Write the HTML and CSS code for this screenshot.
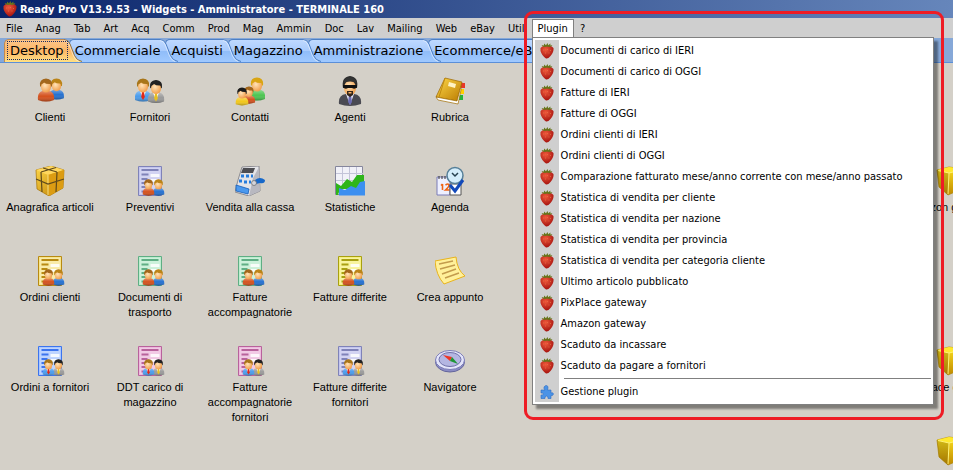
FILE: index.html
```html
<!DOCTYPE html>
<html lang="it">
    <head>
        <meta charset="utf-8">
        <title>Ready Pro</title>
        <link rel="stylesheet" href="styles.css">
    </head>
    <body>
        <!-- shared icons -->
        <svg class="sprites" width="0" height="0" aria-hidden="true">
            <defs>
                <radialGradient id="skin" cx=".4" cy=".35" r=".7"><stop offset="0" stop-color="#ffe3b8"/><stop offset="1" stop-color="#f09a45"/></radialGradient>
                <radialGradient id="berry" cx=".4" cy=".3" r=".7"><stop offset="0" stop-color="#ef5a3c"/><stop offset="1" stop-color="#a5120f"/></radialGradient>
                <linearGradient id="gold" x1="0" y1="0" x2="1" y2="1"><stop offset="0" stop-color="#ffd94a"/><stop offset="1" stop-color="#b97a00"/></linearGradient>
                <linearGradient id="cube-side" x1="0" y1="0" x2="0" y2="1"><stop offset="0" stop-color="#fbe01e"/><stop offset="1" stop-color="#c08a00"/></linearGradient>
                <linearGradient id="shade" x1="0" y1="0" x2="0" y2="1"><stop offset="0" stop-color="#fff" stop-opacity=".35"/><stop offset=".5" stop-color="#fff" stop-opacity="0"/><stop offset="1" stop-color="#000" stop-opacity=".3"/></linearGradient>
                <linearGradient id="tab-blue" x1="0" y1="0" x2="0" y2="1"><stop offset="0" stop-color="#bfd9ff"/><stop offset=".5" stop-color="#a9cbfd"/><stop offset=".5" stop-color="#8fbcf8"/><stop offset="1" stop-color="#a0c9ff"/></linearGradient>
                <linearGradient id="tab-orange" x1="0" y1="0" x2="0" y2="1"><stop offset="0" stop-color="#fcc489"/><stop offset=".5" stop-color="#fdb767"/><stop offset="1" stop-color="#ffe084"/></linearGradient>
            </defs>

            <symbol id="strawberry" viewBox="0 0 14 16">
                <path d="M.5 5Q3 2 7 3Q11 2 13.500 5Q14 9 10.500 13Q8 16 6 15.500Q2 13 .5 8z" fill="url(#berry)"/>
                <path d="M3 3.500L1.500 2 4 2.500 4 .5 6 2.200 7.500 0 8.200 2.200 10.500 .5 10.300 2.500 12.500 2 11 3.500 9 4 7 3.500 5 4z" fill="#66751a"/>
                <path d="M3 7h1M7 6.500h1M10 7.500h1M5 10h1M8.500 10h1" stroke="#e8774a" stroke-width=".7"/>
            </symbol>

            <symbol id="puzzle" viewBox="0 0 14 14">
                <path d="M1 5h4Q3.500 3.500 4 2Q5 .3 6.500 .5Q8.500 1 8 3L7.500 5H11V8Q13 7 13.500 9Q13 11 11 10.500V13.500H8Q8.500 11.500 6.500 11Q4.500 11.500 5 13.500H1V10Q3 10.500 3.500 9Q3 7.500 1 8z" fill="#4b93e6" stroke="#2b6cc4" stroke-width=".6"/>
            </symbol>

            <symbol id="person" viewBox="0 0 18 24">
                <path class="coat" d="M1 22Q0 14 6 13h6Q18 14 17 22Q9 25 1 22z"/>
                <path d="M1 22Q0 14 6 13h6Q18 14 17 22Q9 25 1 22z" fill="url(#shade)"/>
                <path class="shirt" d="M6 13L9 21 12 13z"/>
                <path class="tie" d="M8 14h2l.8 5L9 22 7.200 19z"/>
                <path class="hair" d="M3 8Q2 1 9 .5Q16 1 15 8L13 10H5z"/>
                <ellipse cx="9" cy="9" rx="5" ry="5.500" fill="url(#skin)"/>
                <path class="hair" d="M3.500 6Q4 1.500 9 1Q14 1.500 14.500 6Q9 6.500 7 4.500Q6 6 3.500 6z"/>
            </symbol>

            <symbol id="sheet" viewBox="0 0 30 30">
                <path class="paper" d="M3.500 .5h23v29h-23z"/>
                <path d="M5 2h20v26H5z" fill="#fff" opacity=".25"/>
                <path class="ink" d="M6.500 4h17M6.500 8.500h7M6.500 13h6M6.500 17h6M6.500 21h5M6.500 25.500h4"/>
                <path d="M15.500 8h9v3h-9zM15.500 13h9v3h-9z" fill="#fff" opacity=".85"/>
            </symbol>

            <symbol id="pair" viewBox="0 0 30 30">
                <use href="#person" class="blue-coat" x="17" y="13" width="13" height="17"/>
                <use href="#person" class="red-coat" x="7" y="13" width="13" height="17"/>
            </symbol>

            <symbol id="suits" viewBox="0 0 30 30">
                <use href="#person" class="grey-suit" x="17" y="13" width="13" height="17"/>
                <use href="#person" class="blue-suit" x="7" y="13" width="13" height="17"/>
            </symbol>

            <symbol id="cube" viewBox="0 0 30 30">
                <path d="M2 4L14 1 30 3 29 22 13 29 4 21z" fill="url(#cube-side)" stroke="#b08400" stroke-width=".7"/>
                <path d="M2 4L14 1 30 3 14 7z" fill="#ffe92e"/>
                <path d="M2 4L14 7 13 29 4 21z" fill="#000" opacity=".14"/>
                <path d="M3 4.500L14 7 30 3M14 7L13 28" fill="none" stroke="#fff27a"/>
            </symbol>

            <symbol id="tab-end" viewBox="0 0 18 23">
                <path class="tab-fill" d="M0 .5Q4 .5 6 5L10.500 16.500Q12.500 21.500 18 22.500V23H0z"/>
                <path class="tab-edge" d="M0 .5Q4 .5 6 5L10.500 16.500Q12.500 21.500 18 22.500" fill="none"/>
                <path d="M0 1.500Q3.500 1.500 5 5.500L9.500 17Q11.500 21.500 15 22.500" fill="none" stroke="#fff" stroke-opacity=".5"/>
            </symbol>
        </svg>

        <div id="titlebar">
            <svg class="logo"><use href="#strawberry"/></svg>
            <span>Ready Pro V13.9.53 - Widgets - Amministratore - TERMINALE 160</span>
        </div>

        <ul id="menubar">
            <li><button>File</button></li>
            <li><button>Anag</button></li>
            <li><button>Tab</button></li>
            <li><button>Art</button></li>
            <li><button>Acq</button></li>
            <li><button>Comm</button></li>
            <li><button>Prod</button></li>
            <li><button>Mag</button></li>
            <li><button>Ammin</button></li>
            <li><button>Doc</button></li>
            <li><button>Lav</button></li>
            <li><button>Mailing</button></li>
            <li><button>Web</button></li>
            <li><button>eBay</button></li>
            <li><button>Util</button></li>
            <li class="open">
                <button>Plugin</button>
                <div class="popup">
                    <button><svg><use href="#strawberry"/></svg><span>Documenti di carico di IERI</span></button>
                    <button><svg><use href="#strawberry"/></svg><span>Documenti di carico di OGGI</span></button>
                    <button><svg><use href="#strawberry"/></svg><span>Fatture di IERI</span></button>
                    <button><svg><use href="#strawberry"/></svg><span>Fatture di OGGI</span></button>
                    <button><svg><use href="#strawberry"/></svg><span>Ordini clienti di IERI</span></button>
                    <button><svg><use href="#strawberry"/></svg><span>Ordini clienti di OGGI</span></button>
                    <button><svg><use href="#strawberry"/></svg><span>Comparazione fatturato mese/anno corrente con mese/anno passato</span></button>
                    <button><svg><use href="#strawberry"/></svg><span>Statistica di vendita per cliente</span></button>
                    <button><svg><use href="#strawberry"/></svg><span>Statistica di vendita per nazione</span></button>
                    <button><svg><use href="#strawberry"/></svg><span>Statistica di vendita per provincia</span></button>
                    <button><svg><use href="#strawberry"/></svg><span>Statistica di vendita per categoria cliente</span></button>
                    <button><svg><use href="#strawberry"/></svg><span>Ultimo articolo pubblicato</span></button>
                    <button><svg><use href="#strawberry"/></svg><span>PixPlace gateway</span></button>
                    <button><svg><use href="#strawberry"/></svg><span>Amazon gateway</span></button>
                    <button><svg><use href="#strawberry"/></svg><span>Scaduto da incassare</span></button>
                    <button><svg><use href="#strawberry"/></svg><span>Scaduto da pagare a fornitori</span></button>
                    <hr>
                    <button><svg><use href="#puzzle"/></svg><span>Gestione plugin</span></button>
                </div>
                <div class="highlight"></div>
            </li>
            <li><button>?</button></li>
        </ul>

        <div id="tabs">
            <button class="active"><span>Desktop</span><svg><use href="#tab-end"/></svg></button>
            <button><span>Commerciale</span><svg><use href="#tab-end"/></svg></button>
            <button><span>Acquisti</span><svg><use href="#tab-end"/></svg></button>
            <button><span>Magazzino</span><svg><use href="#tab-end"/></svg></button>
            <button><span>Amministrazione</span><svg><use href="#tab-end"/></svg></button>
            <button><span>Ecommerce/eBay</span><svg><use href="#tab-end"/></svg></button>
        </div>

        <div id="desktop">
            <!-- row 1 -->
            <a href="#"><svg viewBox="0 0 30 30">
                <use href="#person" class="blue-coat" x="13" y="2" width="17" height="22"/>
                <use href="#person" class="red-coat" x="2" y="2" width="18" height="24"/>
            </svg>Clienti</a>
            <a href="#"><svg viewBox="0 0 30 30">
                <use href="#person" class="blue-suit" x="-1" y="2" width="18" height="24"/>
                <use href="#person" class="grey-suit" x="12" y="3" width="18" height="25"/>
            </svg>Fornitori</a>
            <a href="#"><svg viewBox="0 0 30 30">
                <use href="#person" class="green-coat" x="13" y="0" width="18" height="26"/>
                <use href="#person" class="red-coat" x="7" y="10" width="14" height="18"/>
                <use href="#person" class="yellow-coat" x="0" y="11" width="14" height="19"/>
            </svg>Contatti</a>
            <a href="#"><svg viewBox="0 0 30 30">
                <path d="M4 28Q3 19 11 18h8Q27 19 26 28Q15 32 4 28z" fill="#4a4a52"/>
                <path d="M11 18L15 29 19 18z" fill="#e8e8f8"/>
                <path d="M14 19h2l1 7-2 3-2-3z" fill="#6a6ab0"/>
                <path d="M8 12Q6 1 15 0Q24 1 22 12z" fill="#2a2a2a"/>
                <ellipse cx="15" cy="12" rx="6" ry="7.500" fill="url(#skin)"/>
                <path d="M8 7Q9 1 15 1Q21 1 22 7Q15 4 8 7z" fill="#333"/>
                <path d="M8 9h14v2q-2 3-5 1h-4q-3 2-5-1z" fill="#111"/>
                <path d="M12 19v-4h6v4l-3 2zM13.500 16v1.500h3V16z" fill="#33241a" fill-rule="evenodd"/>
            </svg>Agenti</a>
            <a href="#"><svg viewBox="0 0 30 30">
                <path d="M26 7h4v5h-4z" fill="#e8382a"/>
                <path d="M25 13h4v5h-4z" fill="#ffd000"/>
                <path d="M24 19h4v5h-4z" fill="#27b43a"/>
                <path d="M10 2L27 6 22 25 1 21z" fill="url(#gold)" stroke="#9a6400" stroke-width=".7"/>
                <path d="M1 21L22 25 26 10 26 14 23 28 3 24z" fill="#fff" stroke="#a06b00" stroke-width=".7"/>
                <path d="M14 6l7 2-1 4-7-2z" fill="#fff3c4"/>
                <path d="M10 2L4 21" stroke="#c08a10"/>
            </svg>Rubrica</a>

            <!-- row 2 -->
            <a href="#" class="first"><svg viewBox="0 0 30 30">
                <path d="M1 4L16 0 29 4 28 22 14 30 2 23z" fill="url(#gold)" stroke="#a87200" stroke-width=".7"/>
                <path d="M1 4L16 0 29 4 13 9z" fill="#ffd75e"/>
                <path d="M13 9L29 4 28 22 14 30z" fill="#dc9c12"/>
                <path d="M13 9V29" stroke="#fff0a0" stroke-width=".8"/>
                <path d="M1 13L13 18 29 13M6 6L7 26M22 6L21 26M6 6L21 1.500M8 2L22 6" fill="none" stroke="#5f4a1c" stroke-width="1.200"/>
            </svg>Anagrafica articoli</a>
            <a href="#"><svg class="lilac"><use href="#sheet"/><use href="#pair"/></svg>Preventivi</a>
            <a href="#"><svg viewBox="0 0 30 30">
                <path d="M7 1L24 0 25 25 14 30 0 26 3 14z" fill="#e4e4e8" stroke="#77777f" stroke-width=".8"/>
                <path d="M18 12L24 1 25 25 14 30z" fill="#b8b8c0"/>
                <path d="M8 2h12l-2 5H6z" fill="#4d4d52"/>
                <path d="M6 10h3M11 10h3M16 10h2M4 15h3M9 16h3M14 16h2" stroke="#257cdd" stroke-width="3"/>
                <path d="M1 19l13 4-1 5-12-3z" fill="#4b99ee" stroke="#155db8" stroke-width=".8"/>
                <path d="M20 14q5-4 10 0q0 4-5 3l-4 1z" fill="#1768c9"/>
                <circle cx="19" cy="17" r="2.500" fill="#d5d5dc" stroke="#666" stroke-width=".7"/>
            </svg>Vendita alla cassa</a>
            <a href="#"><svg viewBox="0 0 30 30">
                <path d="M.5 .5h27v28H.5z" fill="#f1f1f8" stroke="#85869c"/>
                <path d="M7.500 1v28M14.500 1v28M21.500 1v28M1 7.500h27M1 14.500h27" stroke="#c3c4d8"/>
                <path d="M1 17L6 20 12 13 17 16 22 9 29 9V23H5L3 29H1z" fill="#2eb51a"/>
                <path d="M4 22L10 24 16 20 21 22 25 16 30 15V29.500H4z" fill="#3c8ff0"/>
            </svg>Statistiche</a>
            <a href="#"><svg viewBox="0 0 30 30">
                <path d="M2 11h13v18H2z" fill="#eef0ff" stroke="#7a7db8"/>
                <path d="M4 13v-3M7 13v-3M10 13v-3M13 13v-3" stroke="#333"/>
                <path d="M7.500 18v6M6 19.500l1.500-1.500M10.500 19q3-2 3.500 0q0 2-3.500 5h4" fill="none" stroke="#f06414" stroke-width="1.600"/>
                <path d="M15 18h11v11H15z" fill="#fff" stroke="#555"/>
                <circle cx="20" cy="9.500" r="8" fill="#d4edfb" stroke="#567f98" stroke-width="1.500"/>
                <path d="M17 7l3 3 3-3" fill="none" stroke="#26404f" stroke-width="1.500"/>
                <path d="M15 19l5 6 8-11" fill="none" stroke="#1249ba" stroke-width="3"/>
            </svg>Agenda</a>
            <a href="#" class="last"><svg><use href="#cube"/></svg>Amazon gateway</a>

            <!-- row 3 -->
            <a href="#" class="first"><svg class="amber"><use href="#sheet"/><use href="#pair"/></svg>Ordini clienti</a>
            <a href="#"><svg class="green"><use href="#sheet"/><use href="#pair"/></svg>Documenti di trasporto</a>
            <a href="#"><svg class="green"><use href="#sheet"/><use href="#pair"/></svg>Fatture accompagnatorie</a>
            <a href="#"><svg class="yellow"><use href="#sheet"/><use href="#pair"/></svg>Fatture differite</a>
            <a href="#"><svg viewBox="0 0 30 30">
                <path d="M0 5L21 1Q22 14 30 20L9 28Q1 19 0 5z" fill="#fff09a" stroke="#e8b31c"/>
                <path d="M4 8L18 5M5 13L20 9M7 18L21 13M10 22L24 17" stroke="#c39b4c" stroke-width="1.500"/>
            </svg>Crea appunto</a>

            <!-- row 4 -->
            <a href="#" class="first"><svg class="blue"><use href="#sheet"/><use href="#suits"/></svg>Ordini a fornitori</a>
            <a href="#"><svg class="pink"><use href="#sheet"/><use href="#suits"/></svg>DDT carico di magazzino</a>
            <a href="#"><svg class="pink"><use href="#sheet"/><use href="#suits"/></svg>Fatture accompagnatorie fornitori</a>
            <a href="#"><svg class="lilac"><use href="#sheet"/><use href="#suits"/></svg>Fatture differite fornitori</a>
            <a href="#"><svg viewBox="0 0 30 30">
                <ellipse cx="15" cy="16" rx="14.500" ry="10" fill="#8b8cc4" stroke="#64659c"/>
                <ellipse cx="15" cy="14" rx="14.500" ry="9.500" fill="#e3e4fa" stroke="#7d7eb8"/>
                <ellipse cx="15" cy="13.500" rx="11" ry="7" fill="#b4b6e2" stroke="#6f70a8"/>
                <path d="M8 9l9 2-2 4z" fill="#ee3524"/>
                <path d="M17 11l6 7-8-3z" fill="#1d9637"/>
            </svg>Navigatore</a>
            <a href="#" class="last"><svg><use href="#cube"/></svg>PixPlace gateway</a>

            <!-- row 5 -->
            <a href="#" class="last"><svg><use href="#cube"/></svg></a>
        </div>
    </body>
</html>
```

FILE: styles.css
```css
html, body{
    height: 100%;
}

body{
    margin: 0;
    display: flex;
    flex-direction: column;
    overflow: hidden;
    background-color: #d4d0c8;
    color: #000;
    font-family: "DejaVu Sans Condensed", "DejaVu Sans", sans-serif;
    font-size: 11px;
}

button{
    margin: 0;
    padding: 0;
    border: 0;
    background: none;
    color: inherit;
    font: inherit;
    text-align: left;
    white-space: nowrap;
}

.sprites{
    position: absolute;
}

#titlebar{
    display: flex;
    align-items: center;
    gap: 3px;
    height: 18px;
    flex: none;
    padding-left: 3px;
    background: linear-gradient(to right, #0a246a, #6686bb);
    color: #fff;
    font-weight: bold;
    white-space: nowrap;
}

#titlebar .logo{
    width: 14px;
    height: 16px;
}

/* menu bar */

#menubar{
    display: flex;
    height: 20px;
    flex: none;
    margin: 0;
    padding: 0;
    list-style: none;
    background-color: #cfcfcf;
}

#menubar li{
    padding: 1px 7px 0 6px;
}

#menubar li > button{
    height: 18px;
}

#menubar li.open{
    position: relative;
    z-index: 10;
    box-sizing: border-box;
    height: 19px;
    margin-top: 1px;
    padding: 0 5px;
    border: 1px solid #808080;
    border-bottom: 0;
    background-color: #fff;
}

#menubar li.open > button{
    height: 16px;
}

.popup{
    position: absolute;
    top: 17px;
    left: -1px;
    box-sizing: border-box;
    width: 402px;
    padding: 2px;
    border: 1px solid #808080;
    background: linear-gradient(#cfcfcf, #cfcfcf) 2px 2px / 24px 362px no-repeat #fff;
    box-shadow: 4px 4px 2px rgba(0, 0, 0, 0.4);
}

.popup button{
    display: flex;
    align-items: center;
    width: 100%;
    height: 21px;
}

.popup svg{
    width: 14px;
    height: 16px;
    margin: 0 7px 0 5px;
}

.popup hr{
    margin: 2px 0 2px 29px;
    border: 0;
    border-top: 1px solid #808080;
}

.highlight{
    position: absolute;
    top: -9px;
    left: -9px;
    box-sizing: border-box;
    width: 420px;
    height: 409px;
    border: 3px solid #ee1c25;
    border-radius: 9px;
    pointer-events: none;
}

/* tabs */

#tabs{
    display: flex;
    align-items: flex-end;
    height: 24px;
    flex: none;
    padding-left: 4px;
    border-bottom: 1px solid #5b8fd8;
    background-color: #86a8d8;
    font-family: "DejaVu Sans", sans-serif;
    font-size: 13px;
}

#tabs button{
    position: relative;
    display: flex;
    height: 23px;
    margin-right: -13px;
    --fill: url(#tab-blue);
    --edge: #4d7fc4;
}

#tabs button:nth-child(1){ z-index: 6; }
#tabs button:nth-child(2){ z-index: 5; }
#tabs button:nth-child(3){ z-index: 4; }
#tabs button:nth-child(4){ z-index: 3; }
#tabs button:nth-child(5){ z-index: 2; }

#tabs span{
    box-sizing: border-box;
    height: 23px;
    padding-left: 5px;
    border: solid #4d7fc4;
    border-width: 1px 0 0 1px;
    border-top-left-radius: 5px;
    background: linear-gradient(#bfd9ff, #a9cbfd 50%, #8fbcf8 50%, #a0c9ff);
    line-height: 22px;
}

#tabs svg{
    width: 18px;
    height: 23px;
}

#tabs .active{
    --fill: url(#tab-orange);
    --edge: #8d7247;
}

#tabs .active span{
    border-color: #c08a50;
    background: linear-gradient(#fcc489, #fdb767 50%, #ffe084);
}

#tabs .active::after{
    content: "";
    position: absolute;
    inset: 2px 14px 2px 3px;
    border: 1px dotted #1a2a60;
}

.tab-fill{
    fill: var(--fill);
}

.tab-edge{
    stroke: var(--edge);
}

/* desktop icons */

#desktop{
    display: grid;
    grid-template-columns: repeat(10, 100px);
    grid-auto-rows: 90px;
    flex: 1;
    min-height: 0;
    overflow: hidden;
    padding-top: 13px;
    font-family: "Liberation Sans", sans-serif;
    font-size: 11px;
    line-height: 15px;
    text-align: center;
}

#desktop a{
    display: flex;
    flex-direction: column;
    align-items: center;
    gap: 4px;
    color: #000;
    text-decoration: none;
}

#desktop .first{
    grid-column: 1;
}

#desktop .last{
    grid-column: 10;
}

#desktop svg{
    width: 30px;
    height: 30px;
    flex: none;
}

.paper{
    fill: var(--paper);
    stroke: var(--ink);
}

.ink{
    fill: none;
    stroke: var(--ink);
    stroke-width: 2;
}

.lilac{  --paper: #c3c5ee; --ink: #7f82b8; }
.amber{  --paper: #f7e58c; --ink: #b88a12; }
.green{  --paper: #bdeccf; --ink: #5fae84; }
.yellow{ --paper: #f6f07e; --ink: #a8a010; }
.blue{   --paper: #a9c6ff; --ink: #3c74ee; }
.pink{   --paper: #edb9dd; --ink: #b8629c; }

.coat{ fill: var(--coat); }
.shirt{ fill: var(--shirt, none); }
.tie{ fill: var(--tie, none); }
.hair{ fill: var(--hair, #a8761a); }

.red-coat{ --coat: #d4501c; --hair: #a3671c; }
.blue-coat{ --coat: #2470d0; --hair: #bb8418; }
.green-coat{ --coat: #4cc552; --hair: #d9a514; }
.yellow-coat{ --coat: #f2c81c; --hair: #1c1c1c; }
.blue-suit{ --coat: #4a9cec; --shirt: #fff; --tie: #e02818; }
.grey-suit{ --coat: #9a9a9a; --shirt: #fff; --tie: #e8c020; --hair: #222; }
```
